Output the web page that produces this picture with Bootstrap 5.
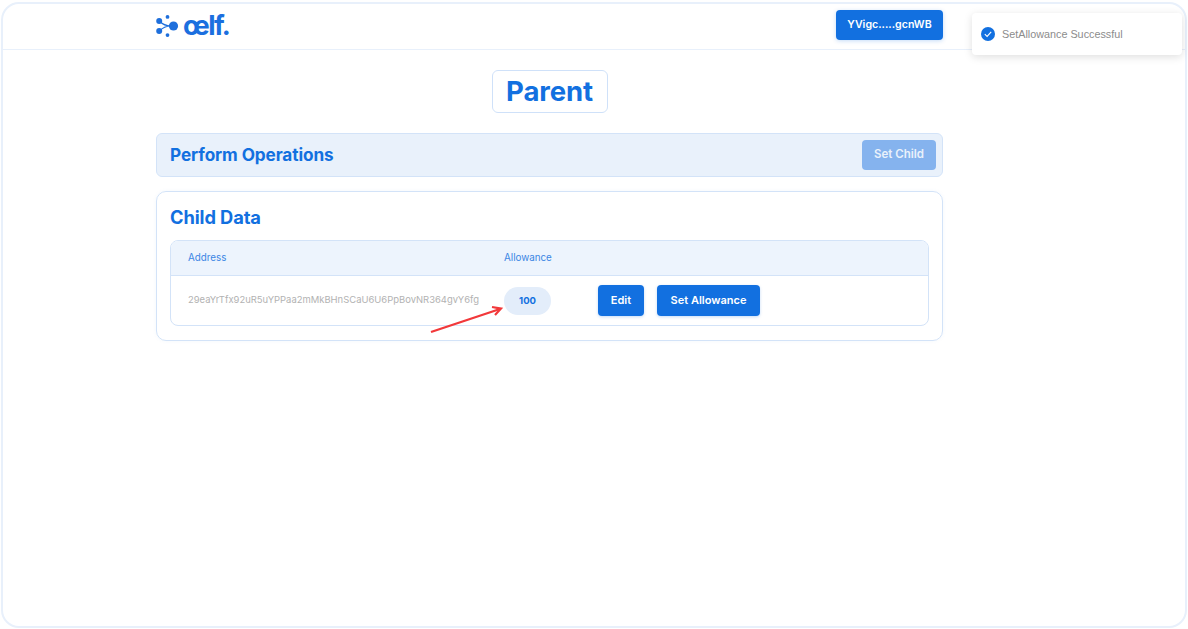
<!DOCTYPE html>
<html lang="en">
<head>
<meta charset="utf-8">
<title>Parent</title>
<link href="https://cdn.jsdelivr.net/npm/bootstrap@5.3.0/dist/css/bootstrap.min.css" rel="stylesheet">
<style>
html,body{height:100%;background:#fff;}
body{font-family:Inter,"Open Sans",sans-serif;padding:2px 1px 1px 1px;overflow:hidden;position:relative;}
.app-frame{height:626px;width:1186px;border:2px solid #e8f0fb;border-radius:18px;overflow:hidden;}
.top-bar{height:46px;border-bottom:1px solid #e8f0fb;padding:0;}
.wrap-box{width:787px;margin-left:153px;}
.brand-mark{display:flex;align-items:center;gap:4px;color:#1e6fdc;margin-top:-2px;}
.brand-word{font-size:27px;line-height:1;font-weight:700;letter-spacing:-1.5px;color:#1b6fdf;}
.wallet-btn{background:#1270e0;border:0;color:#fff;font-size:10.6px;font-weight:600;width:107px;height:30px;padding:0;border-radius:4px;box-shadow:0 1px 4px rgba(18,112,224,.25);margin-top:-4px;}
.title-pill{width:116px;height:43px;border:1px solid #cfe1f9;border-radius:6px;color:#1270e0;font-size:27.5px;font-weight:700;line-height:41px;text-align:center;margin:20px auto 20px;letter-spacing:-.1px;}
.ops-bar{height:44px;background:#e9f1fb;border:1px solid #d3e3f8;border-radius:6px;padding:0 6px 0 13px;margin-bottom:14px;}
.ops-title{color:#1270e0;font-size:17.2px;font-weight:700;margin:0;letter-spacing:-.1px;}
.child-btn{background:#85b3ee;border:0;color:#e9f1fb;font-size:11.5px;font-weight:600;width:74px;height:30px;padding:0;border-radius:4px;}
.data-card{height:150px;border:1px solid #d3e3f8;border-radius:10px;padding:14px 13px 0;box-shadow:0 0 4px rgba(18,112,224,.05);}
.data-title{color:#1270e0;font-size:18.3px;font-weight:700;margin:0 0 12px;line-height:22px;letter-spacing:-.1px;}
.data-table{height:86px;border:1px solid #d3e3f8;border-radius:8px;overflow:hidden;}
.head-row{height:35px;background:#edf4fd;border-bottom:1px solid #d3e3f8;color:#3b86e4;font-size:9.8px;padding-left:17px;}
.body-row{height:49px;padding-left:17px;}
.cell-addr{width:316px;flex:none;}
.addr-text{color:#b2b2b2;font-size:9.45px;white-space:nowrap;}
.allow-pill{width:47px;height:28px;border-radius:14px;background:#e3edfa;color:#1270e0;font-size:9.5px;font-weight:700;line-height:28px;text-align:center;flex:none;}
.act-btn{background:#1270e0;border:0;color:#fff;font-size:11px;font-weight:600;height:31px;padding:0;border-radius:4px;box-shadow:0 1px 3px rgba(18,112,224,.25);flex:none;}
.edit-w{width:46px;margin-left:47px;}
.set-w{width:103px;margin-left:13px;}
.toast-note{position:absolute;left:972px;top:13px;width:210px;height:42px;background:#fff;border-radius:4px;box-shadow:0 2px 8px rgba(0,0,0,.13);padding-left:9px;gap:7px;font-family:"Liberation Sans",sans-serif;font-size:10.8px;color:#8c8c8c;}
.red-arrow{position:absolute;left:429px;top:305px;}
</style>
</head>
<body>
<div class="app-frame">
  <nav class="navbar top-bar">
    <div class="wrap-box d-flex justify-content-between align-items-center">
      <div class="brand-mark">
        <svg width="23" height="22" viewBox="0 0 23 22" fill="#1e6fdc" aria-hidden="true">
          <circle cx="3.2" cy="6" r="3"/><circle cx="3.2" cy="16" r="3"/><circle cx="11.5" cy="1.9" r="1.9"/><circle cx="11.5" cy="20.1" r="1.9"/><circle cx="17.5" cy="11" r="4.6"/>
          <path d="M3.5 6 Q8 11 15 11 Q8 11 3.5 16" fill="none" stroke="#1e6fdc" stroke-width="1.2"/>
        </svg>
        <span class="brand-word">œlf.</span>
      </div>
      <button class="btn wallet-btn">YVigc.....gcnWB</button>
    </div>
  </nav>
  <div class="wrap-box">
    <div class="title-pill">Parent</div>
    <div class="ops-bar d-flex justify-content-between align-items-center">
      <h2 class="ops-title">Perform Operations</h2>
      <button class="btn child-btn">Set Child</button>
    </div>
    <div class="data-card">
      <h2 class="data-title">Child Data</h2>
      <div class="data-table">
        <div class="head-row d-flex align-items-center">
          <div class="cell-addr">Address</div>
          <div>Allowance</div>
        </div>
        <div class="body-row d-flex align-items-center">
          <div class="cell-addr addr-text">29eaYrTfx92uR5uYPPaa2mMkBHnSCaU6U6PpBovNR364gvY6fg</div>
          <div class="allow-pill">100</div>
          <button class="btn act-btn edit-w">Edit</button>
          <button class="btn act-btn set-w">Set Allowance</button>
        </div>
      </div>
    </div>
  </div>
</div>
<svg class="red-arrow" width="76" height="30" viewBox="0 0 76 30" aria-hidden="true">
  <path d="M2 27 L71 4" stroke="#f2383a" stroke-width="2.2" fill="none"/>
  <path d="M63 2 L72 3.6 L66 10" stroke="#f2383a" stroke-width="2.2" fill="none"/>
</svg>
<div class="toast-note d-flex align-items-center">
  <svg width="14" height="14" viewBox="0 0 14 14" aria-hidden="true"><circle cx="7" cy="7" r="7" fill="#1270e0"/><path d="M3.8 7.2 L6.1 9.4 L10.2 4.9" fill="none" stroke="#fff" stroke-width="1.1"/></svg>
  <span>SetAllowance Successful</span>
</div>
<script src="https://cdn.jsdelivr.net/npm/bootstrap@5.3.0/dist/js/bootstrap.bundle.min.js"></script>
</body>
</html>
